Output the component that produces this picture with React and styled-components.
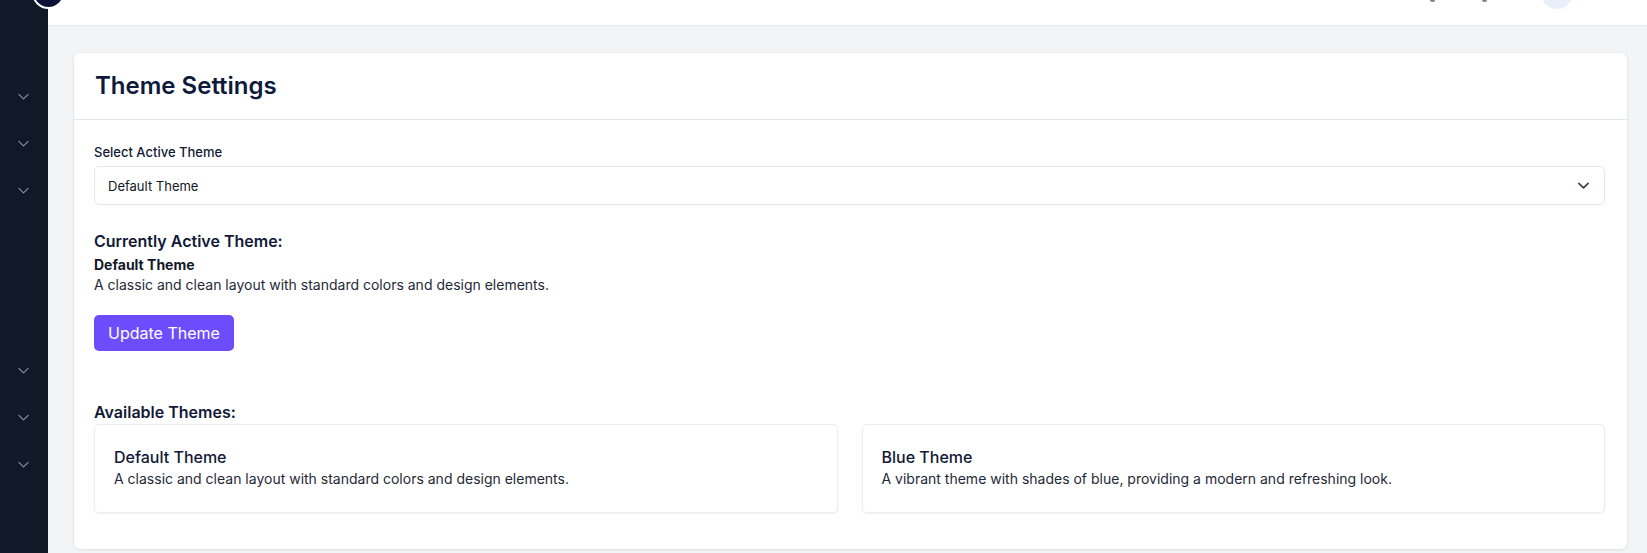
import React, { useState } from "react";
import styled, { createGlobalStyle } from "styled-components";

const GlobalStyle = createGlobalStyle`
  * { box-sizing: border-box; }
  html, body { margin: 0; padding: 0; height: 100%; overflow: hidden; }
  body {
    font-family: Inter, "Noto Sans", "Liberation Sans", sans-serif;
    background: #f3f4f6;
    color: #1f2937;
  }
`;

const Layout = styled.div`
  display: flex;
  height: 553px;
  position: relative;
`;

const Sidebar = styled.aside`
  width: 48px;
  flex-shrink: 0;
  background: #111827;
  display: flex;
  flex-direction: column;
`;

const NavGroup = styled.div`
  display: flex;
  flex-direction: column;
  margin-top: ${(p) => p.$top}px;
`;

const NavItem = styled.div`
  height: 47px;
  display: flex;
  align-items: center;
  justify-content: center;
  color: #8b93a1;
  padding-right: 2px;
`;

const Logo = styled.div`
  position: absolute;
  left: 32px;
  top: -24px;
  width: 33px;
  height: 33px;
  border-radius: 50%;
  background: #0b1437;
  border: 2px solid #ffffff;
  z-index: 2;
`;

const Main = styled.div`
  flex: 1;
  display: flex;
  flex-direction: column;
  min-width: 0;
`;

const Topbar = styled.header`
  height: 26px;
  flex-shrink: 0;
  background: #ffffff;
  border-bottom: 1px solid #e5e7eb;
  display: flex;
  justify-content: flex-end;
  align-items: flex-start;
  padding-right: 74px;
  overflow: hidden;
`;

const TopIcon = styled.span`
  width: 5px;
  height: 2px;
  background: #7b8494;
  border-radius: 0 0 2px 2px;
  margin-right: ${(p) => p.$gap}px;
`;

const Avatar = styled.span`
  width: 32px;
  height: 32px;
  margin-top: -23px;
  border-radius: 50%;
  background: #e9effa;
`;

const Content = styled.main`
  flex: 1;
  padding: 27px 20px 0 26px;
`;

const Card = styled.section`
  background: #ffffff;
  border-radius: 6px;
  box-shadow: 0 1px 3px rgba(0, 0, 0, 0.08), 0 0 0 1px rgba(0, 0, 0, 0.02);
  padding-bottom: 36px;
`;

const CardHeader = styled.div`
  height: 67px;
  padding: 0 21px;
  display: flex;
  align-items: center;
  border-bottom: 1px solid #e5e7eb;
`;

const Title = styled.h1`
  margin: 0;
  font-size: 24px;
  line-height: 32px;
  font-weight: 600;
  color: #0f1a3a;
`;

const CardBody = styled.div`
  padding: 23px 22px 0 20px;
`;

const Label = styled.label`
  display: block;
  font-size: 13px;
  line-height: 18px;
  font-weight: 500;
  color: #111936;
  margin-bottom: 5px;
`;

const SelectBox = styled.div`
  height: 39px;
  border: 1px solid #e5e7eb;
  border-radius: 5px;
  display: flex;
  align-items: center;
  justify-content: space-between;
  padding: 0 15px 0 13px;
  font-size: 13px;
  color: #111827;
`;

const SectionTitle = styled.h2`
  margin: ${(p) => p.$top}px 0 0 0;
  font-size: 16px;
  font-weight: 600;
  color: #111936;
  line-height: ${(p) => p.$lh || 24}px;
`;

const ActiveName = styled.div`
  margin-top: 2px;
  font-size: 14px;
  font-weight: 700;
  color: #111827;
  line-height: 20px;
`;

const Desc = styled.p`
  margin: 0;
  font-size: 14px;
  color: #1f2937;
  line-height: 20px;
`;

const Button = styled.button`
  display: block;
  margin-top: 20px;
  height: 36px;
  padding: 0 14px;
  background: #6c4dfd;
  color: #ffffff;
  border: none;
  border-radius: 5px;
  font-family: inherit;
  font-size: 16px;
  cursor: pointer;
`;

const ThemeGrid = styled.div`
  display: grid;
  grid-template-columns: 1fr 1fr;
  gap: 24px;
`;

const ThemeCard = styled.div`
  height: 89px;
  border: 1px solid #ececec;
  border-radius: 5px;
  box-shadow: 0 1px 2px rgba(0, 0, 0, 0.05);
  padding: 20px 19px 0 19px;
  cursor: pointer;
`;

const ThemeName = styled.div`
  font-size: 16px;
  font-weight: 500;
  color: #111936;
  line-height: 24px;
`;

const ThemeDesc = styled.div`
  font-size: 14px;
  color: #1f2937;
  line-height: 20px;
`;

const Chevron = ({ size = 10, color = "currentColor", width = 1 }) => (
  <svg width={size} height={size} viewBox="0 0 10 10" fill="none">
    <path d="M0.8 3l4.2 4.2 4.2-4.2" stroke={color} strokeWidth={width} strokeLinecap="round" strokeLinejoin="round" />
  </svg>
);

const themes = [
  {
    name: "Default Theme",
    desc: "A classic and clean layout with standard colors and design elements.",
  },
  {
    name: "Blue Theme",
    desc: "A vibrant theme with shades of blue, providing a modern and refreshing look.",
  },
];

export default function App() {
  const [active] = useState(themes[0]);

  return (
    <>
      <GlobalStyle />
      <Layout>
        <Logo />
        <Sidebar>
          <NavGroup $top={73}>
            {[0, 1, 2].map((i) => (
              <NavItem key={i}><Chevron size={11} /></NavItem>
            ))}
          </NavGroup>
          <NavGroup $top={133}>
            {[0, 1, 2].map((i) => (
              <NavItem key={i}><Chevron size={11} /></NavItem>
            ))}
          </NavGroup>
        </Sidebar>
        <Main>
          <Topbar>
            <TopIcon $gap={47} />
            <TopIcon $gap={54} />
            <Avatar />
          </Topbar>
          <Content>
            <Card>
              <CardHeader>
                <Title>Theme Settings</Title>
              </CardHeader>
              <CardBody>
                <Label>Select Active Theme</Label>
                <SelectBox>
                  <span>{active.name}</span>
                  <Chevron size={11} color="#374151" width={1.5} />
                </SelectBox>

                <SectionTitle $top={24}>Currently Active Theme:</SectionTitle>
                <ActiveName>{active.name}</ActiveName>
                <Desc>{active.desc}</Desc>
                <Button>Update Theme</Button>

                <SectionTitle $top={50} $lh={23}>Available Themes:</SectionTitle>
                <ThemeGrid>
                  {themes.map((t) => (
                    <ThemeCard key={t.name}>
                      <ThemeName>{t.name}</ThemeName>
                      <ThemeDesc>{t.desc}</ThemeDesc>
                    </ThemeCard>
                  ))}
                </ThemeGrid>
              </CardBody>
            </Card>
          </Content>
        </Main>
      </Layout>
    </>
  );
}
